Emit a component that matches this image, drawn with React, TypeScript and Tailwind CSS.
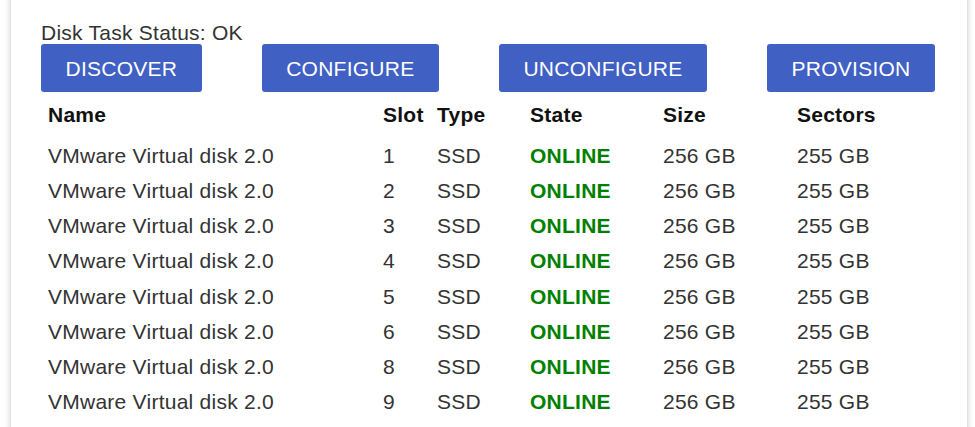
import React from "react";

const rows = [1, 2, 3, 4, 5, 6, 8, 9];
const buttons = ["DISCOVER", "CONFIGURE", "UNCONFIGURE", "PROVISION"];

export default function App() {
  return (
    <div
      className="w-[975px] h-[427px] overflow-hidden bg-white pl-[10px]"
      style={{ fontFamily: '"Liberation Sans", Arial, sans-serif' }}
    >
      <div className="w-[958px] h-[470px] -mt-[20px] bg-white border-x border-[#e2e2e2] shadow-[0_0_6px_rgba(0,0,0,0.18)] pl-[30px] pr-[32px] pt-[41px]">
        <div className="text-[21px] leading-[23px] tracking-[0.25px] text-[#333]">Disk Task Status: OK</div>
        <div className="flex gap-[60px]">
          {buttons.map((b) => (
            <button
              key={b}
              className="h-[48px] px-[24.5px] rounded-[3px] bg-[#4160c4] text-white text-[21px] leading-[23px] tracking-[0.25px]"
            >
              {b}
            </button>
          ))}
        </div>
        <div className="mt-[5px] grid grid-cols-[335px_54px_93px_133px_134px_1fr] grid-rows-[41px] auto-rows-[35.15px] text-[21px] leading-[35px] tracking-[0.25px]">
          {["Name", "Slot", "Type", "State", "Size", "Sectors"].map((h) => (
            <div key={h} className="px-[7px] font-bold text-[#111]">
              {h}
            </div>
          ))}
          {rows.map((r) => (
            <React.Fragment key={r}>
              <div className="px-[7px] text-[#333]">VMware Virtual disk 2.0</div>
              <div className="px-[7px] text-[#333]">{r}</div>
              <div className="px-[7px] text-[#333]">SSD</div>
              <div className="px-[7px] font-bold text-[#008000]">ONLINE</div>
              <div className="px-[7px] text-[#333]">256 GB</div>
              <div className="px-[7px] text-[#333]">255 GB</div>
            </React.Fragment>
          ))}
        </div>
      </div>
    </div>
  );
}
